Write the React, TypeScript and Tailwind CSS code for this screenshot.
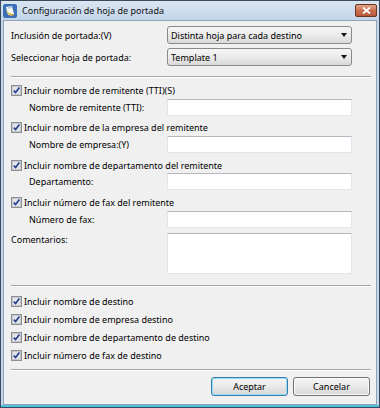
import React from "react";

const font = { fontFamily: '"Noto Sans", "DejaVu Sans", sans-serif' };

function Check() {
  return (
    <svg width="11" height="11" viewBox="0 0 11 11" className="shrink-0">
      <rect x="0.5" y="0.5" width="10" height="10" fill="#f4f4f4" stroke="#8e8f8f" />
      <rect x="1.5" y="1.5" width="8" height="8" fill="#e2e4ea" stroke="#c4c8d0" />
      <path d="M2.8 5.6 L4.6 7.6 L8.4 2.6" fill="none" stroke="#233d8f" strokeWidth="1.6" />
    </svg>
  );
}

function CheckRow({ label, className = "" }: { label: string; className?: string }) {
  return (
    <div className={"flex items-center gap-[2px] " + className}>
      <Check />
      <span>{label}</span>
    </div>
  );
}

function Select({ value }: { value: string }) {
  return (
    <div className="ml-auto mr-[19px] flex h-[18px] w-[185px] items-center rounded-[3px] border border-[#8a8a8a] bg-gradient-to-b from-[#f6f6f6] via-[#ebebeb] to-[#d9d9d9] pl-[3px] pr-[4px]">
      <span className="flex-1">{value}</span>
      <svg width="6" height="4" viewBox="0 0 6 4">
        <path d="M0 0 H6 L3 4 Z" fill="#111" />
      </svg>
    </div>
  );
}

function Field({ label, className = "" }: { label: string; className?: string }) {
  return (
    <div className={"flex h-[17px] items-center pl-[18px] " + className}>
      <span>{label}</span>
      <div className="ml-auto mr-[19px] h-[17px] w-[185px] border border-[#e2e6ec] border-t-[#b4b7bd] bg-white" />
    </div>
  );
}

function Sep({ className = "" }: { className?: string }) {
  return <div className={"h-[2px] border-t border-[#a6a6a6] border-b border-b-white " + className} />;
}

function Button({ label, def }: { label: string; def?: boolean }) {
  return (
    <div
      className={
        "flex h-[19px] w-[77px] items-center justify-center rounded-[3px] border bg-gradient-to-b from-[#f4f4f4] via-[#e9e9e9] to-[#d6d6d6] " +
        (def ? "border-[#3d7bad] shadow-[inset_0_0_0_1px_#8fe0f6]" : "border-[#707070] shadow-[inset_0_0_0_1px_#fbfbfb]")
      }
    >
      {label}
    </div>
  );
}

export default function App() {
  return (
    <div
      className="flex h-[408px] w-[380px] flex-col whitespace-nowrap border border-[#3a4a5c] bg-[#c4d6ea] text-[9px] leading-none text-[#000]"
      style={font}
    >
      <div className="flex h-[19px] items-center bg-gradient-to-b from-[#d9e5f2] to-[#c3d5ea] pl-[2px] pr-[2px]">
        <svg width="14" height="14" viewBox="0 0 14 14" className="shrink-0">
          <rect x="0" y="0" width="14" height="14" rx="2" fill="#3b70b8" />
          <path d="M3 3 L9 2 L11 10 L5 11 Z" fill="#f7f7f2" />
          <path d="M2 6 L7 12 L12 11 L6 9 Z" fill="#e0b040" />
          <path d="M5 4 L9 3.5" stroke="#7a9ccc" strokeWidth="0.8" />
        </svg>
        <span className="ml-[5px] text-[9px] text-[#111]">Configuración de hoja de portada</span>
        <div className="ml-auto flex h-[13px] w-[22px] items-center justify-center rounded-[2px] border border-[#6e3523] bg-gradient-to-b from-[#e0a486] via-[#c9714f] to-[#b9563a]">
          <svg width="9" height="7" viewBox="0 0 9 7">
            <path d="M1 0.5 L8 6.5 M8 0.5 L1 6.5" stroke="#fff" strokeWidth="1.8" />
          </svg>
        </div>
      </div>
      <div className="flex flex-1 px-[2px]">
        <div className="flex flex-1 flex-col border border-[#8ea3ba] bg-[#f0f0f0] pl-[7px] pr-[5px]">
          <div className="mt-[5px] flex items-center">
            <span>Inclusión de portada:(V)</span>
            <Select value="Distinta hoja para cada destino" />
          </div>
          <div className="mt-[4px] flex items-center">
            <span>Seleccionar hoja de portada:</span>
            <Select value="Template 1" />
          </div>
          <Sep className="mt-[10px]" />
          <CheckRow className="mt-[4px] h-[16px]" label="Incluir nombre de remitente (TTI)(S)" />
          <Field className="mt-[1px]" label="Nombre de remitente (TTI):" />
          <CheckRow className="mt-[3px] h-[16px]" label="Incluir nombre de la empresa del remitente" />
          <Field className="mt-[1px]" label="Nombre de empresa:(Y)" />
          <CheckRow className="mt-[4px] h-[16px]" label="Incluir nombre de departamento del remitente" />
          <Field label="Departamento:" />
          <CheckRow className="mt-[4px] h-[16px]" label="Incluir número de fax del remitente" />
          <Field className="mt-[1px]" label="Número de fax:" />
          <div className="mt-[5px] flex">
            <span className="pt-[2px]">Comentarios:</span>
            <div className="ml-auto mr-[19px] h-[41px] w-[185px] border border-[#e2e6ec] border-t-[#b4b7bd] bg-white" />
          </div>
          <Sep className="mt-[11px]" />
          <div className="mt-[5px] flex flex-col">
            <CheckRow className="h-[18px]" label="Incluir nombre de destino" />
            <CheckRow className="h-[18px]" label="Incluir nombre de empresa destino" />
            <CheckRow className="h-[18px]" label="Incluir nombre de departamento de destino" />
            <CheckRow className="h-[18px]" label="Incluir número de fax de destino" />
          </div>
          <Sep className="mt-[5px]" />
          <div className="mt-[6px] flex justify-end gap-[5px] pr-[1px]">
            <Button label="Aceptar" def />
            <Button label="Cancelar" />
          </div>
        </div>
      </div>
      <div className="h-[2px] bg-[#4cc2dc]" />
    </div>
  );
}
